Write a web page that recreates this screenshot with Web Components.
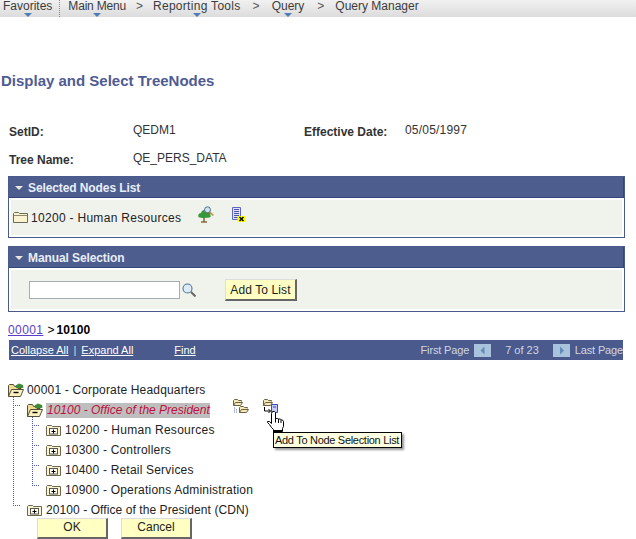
<!DOCTYPE html>
<html><head><meta charset="utf-8"><style>
html,body{margin:0;padding:0;background:#fff;overflow:hidden}
body{width:636px;height:539px;font:12px "Liberation Sans",Arial,sans-serif;color:#000}
</style></head><body>
<top-nav></top-nav>
<page-title>Display and Select TreeNodes</page-title>
<info-grid></info-grid>
<group-box title="Selected Nodes List" style="margin-top:8px"><selected-row></selected-row></group-box>
<group-box title="Manual Selection" tall style="margin-top:8px"><manual-row></manual-row></group-box>
<tree-crumb></tree-crumb>
<tree-toolbar></tree-toolbar>
<node-tree></node-tree>
<button-row></button-row>
<script>
const ICON={
 folder:`<svg width="15" height="11" viewBox="0 0 15 11"><path d="M.5 10.500V1.500l1-1h4l1 1h8v9z" fill="#fbf3cf" stroke="#6b6b5a"/><path d="M1 3.500h13" stroke="#8a8a70"/></svg>`,
 closed:`<svg width="16" height="11" viewBox="0 0 16 11"><path d="M.5 10.500V1.500l1-1h4l1 1h8v9z" fill="#fbf3cf" stroke="#6b6650"/><rect x="3.500" y="3.500" width="8" height="5.500" fill="#fffdf0" stroke="#555"/><path d="M5.500 6.500h4" stroke="#000"/><path d="M7.500 4.500v4" stroke="#000"/></svg>`,
 open:`<svg width="16" height="14" viewBox="0 0 16 14"><path d="M.5 13.500V2.500l1-1h4l1 2h4v3" fill="#f1dc96" stroke="#55503c"/><path d="M.5 13.500l3-7h12l-3 7z" fill="#fbf0c0" stroke="#55503c"/><path d="M7.500 2.500L11 .5l4 1.500.5 2.500-3.500 1.500-4-1z" fill="#3d8a3a"/><path d="M10 5.500h3" stroke="#6b4a20"/><path d="M5.500 9.500h5" stroke="#000" stroke-width="1.400"/></svg>`,
 tree:`<svg width="16" height="17" viewBox="0 0 16 17"><path d="M6 10.500v5M3 16h6" stroke="#8a6a40" stroke-width="1.600"/><path d="M.5 11c-1-2.500 1-4 2.500-4 .5-2.500 3-3.500 5-2.500 2.500 0 5 2 4.500 6.500-2 1-9 1.500-12 0z" fill="#37983a"/><circle cx="9.500" cy="3.800" r="3" fill="#cfe3f3" stroke="#5a6f7f"/><path d="M11.800 6.200l3.500 3.300" stroke="#b9913c" stroke-width="1.600"/></svg>`,
 del:`<svg width="14" height="15" viewBox="0 0 14 15"><path d="M.5.500h8v12h-8z" fill="#dfe2fa" stroke="#6068c0"/><path d="M2 2.500h5M2 4.500h5M2 6.500h5M2 8.500h5M2 10.500h4" stroke="#4a54a8"/><path d="M5.500 9h8.500v6H5.500z" fill="#ff0"/><path d="M7.500 10l4 4M11.500 10l-4 4" stroke="#000" stroke-width="1.500"/></svg>`,
 mag:`<svg width="14" height="14" viewBox="0 0 14 14"><circle cx="5.500" cy="5.500" r="4.500" fill="#dcebf7" stroke="#51758f" stroke-width="1.100"/><path d="M9 9l4.500 4.500" stroke="#666" stroke-width="2"/></svg>`,
 two:`<svg width="16" height="15" viewBox="0 0 16 15"><path d="M.5 6.500v-5l1-1h3l1 1h3v1M.5 6.500l2-3h7l-2 3z" fill="#f7e7b5" stroke="#6b6348"/><path d="M6.500 13.500v-5l1-1h3l1 1h3v1M6.500 13.500l2-3h7l-2 3z" fill="#f7e7b5" stroke="#6b6348"/><path d="M1 9h.9M1 11h.9M1 13h.9M3 11h.9M3 13h.9" stroke="#5a6fb0"/></svg>`,
 add:`<svg width="15" height="15" viewBox="0 0 15 15"><path d="M.5 6.500v-5l1-1h3l1 1h3v1M.5 6.500l2-3h7l-2 3z" fill="#f7e7b5" stroke="#6b6348"/><path d="M1.500 8v4h6M5.500 10l2 2-2 2" fill="none" stroke="#000"/><path d="M8.500 5.500h6v8h-6z" fill="#c5cdf5" stroke="#3a48c0"/><path d="M10 8h3" stroke="#3a48c0"/></svg>`,
 hand:`<svg width="18" height="21" viewBox="0 0 18 21"><path d="M6.500.5h2l1 1v6h2l1 .5h2l1 1h1l1 1.500v5l-1 2v3h-9v-2l-2-2-2-3-2-2v-1h2l2 2v-10z" fill="#fff" stroke="#000"/><path d="M9.500 7.500v4M12.500 8v4M15 9v3" stroke="#000" fill="none"/><path d="M7 20h9" stroke="#000" stroke-width="2"/></svg>`,
 left:`<svg width="17" height="13" viewBox="0 0 17 13"><rect width="17" height="13" fill="#a9c3dc"/><path d="M10.500 2.500v8l-4-4z" fill="#5f8db8"/></svg>`,
 right:`<svg width="17" height="13" viewBox="0 0 17 13"><rect width="17" height="13" fill="#a9c3dc"/><path d="M7 2.500v8l4-4z" fill="#5f8db8"/></svg>`
};
const def=(n,css,html)=>customElements.define(n,class extends HTMLElement{constructor(){super();this.attachShadow({mode:'open'})}connectedCallback(){this.shadowRoot.innerHTML=`<style>${css}</style>${typeof html==='function'?html(this):html}`}});

def('top-nav',`:host{display:flex;height:17px;background:linear-gradient(#f1f1f1,#dcdcdc);font-size:12px;color:#3c3c3c;line-height:12px}
.i{position:relative;white-space:nowrap;display:block}.i.d::after{content:"";position:absolute;left:50%;margin-left:-4px;top:13px;border:4px solid transparent;border-top:4px solid #4f7cb4;border-bottom:0}
.s{width:0;border-left:1px dotted #888;margin:0 8px 0 7px}.g{display:block;color:#555}`,
`<span class="i d" style="margin-left:3px">Favorites</span><span class="s"></span>
<span class="i d" style="letter-spacing:-.2px">Main Menu</span><span class="g" style="margin:0 10px 0 10px">&gt;</span><span class="i d" style="letter-spacing:.3px">Reporting Tools</span><span class="g" style="margin:0 12px">&gt;</span><span class="i d">Query</span><span class="g" style="margin:0 11px 0 13px">&gt;</span><span class="i">Query Manager</span>`);

def('page-title',`:host{display:block;margin:56px 0 0 1px;font:bold 15px/16px "Liberation Sans",Arial,sans-serif;color:#4f5b93}`,`<slot></slot>`);

def('info-grid',`:host{display:grid;grid-template-columns:124px 171px 101px auto;grid-template-rows:28px 17px;margin:34px 0 0 9px;font-size:12px;line-height:14px}
b{font-weight:bold;color:#333;padding-top:2px}span{color:#333}`,
`<b>SetID:</b><span>QEDM1</span><b>Effective Date:</b><span style="letter-spacing:.2px">05/05/1997</span><b>Tree Name:</b><span>QE_PERS_DATA</span>`);

def('group-box',`:host{display:block;margin-left:8px;width:617px;box-sizing:border-box;border:1px solid #4a5a8c}
.h{height:21px;box-sizing:border-box;background:#4d5d8e;border-right:1px solid #33457a;border-bottom:1px solid #33457a;font:bold 12px/20px "Liberation Sans",Arial,sans-serif;display:flex;align-items:center;gap:5px;padding:1px 0 0 6px;color:#e8eef8;letter-spacing:-.1px}
.t{width:0;height:0;border:4px solid transparent;border-top:4px solid #e8e8e0;border-bottom:0}
.b{margin:2px;background:#f0f2ec}`,
h=>`<div class="h"><span class="t"></span>${h.getAttribute('title')}</div><div class="b"><slot></slot></div>`);

def('selected-row',`:host{display:flex;align-items:center;height:35px;padding-left:2px;font-size:12px;color:#222}
svg{display:block}.a{margin:0 0 7px 17px}.c{margin:0 0 6px 18px}.n{margin-left:3px;letter-spacing:.3px}`,
`${ICON.folder}<span class="n">10200 - Human Resources</span><span class="a">${ICON.tree}</span><span class="c">${ICON.del}</span>`);

def('manual-row',`:host{display:flex;align-items:center;height:39px;padding-left:18px}
.in{width:151px;height:18px;box-sizing:border-box;background:#fff;border:1px solid #a5acb2}
svg{display:block}.m{margin-left:2px}
.btn{margin-left:29px;width:72px;height:22px;box-sizing:border-box;background:#ffffc4;border:solid;border-width:1px 2px 2px 1px;border-color:#ddd #666 #666 #ddd;font-size:12px;line-height:20px;text-align:center;color:#222;letter-spacing:.1px}`,
`<span class="in"></span><span class="m">${ICON.mag}</span><span class="btn">Add To List</span>`);

def('tree-crumb',`:host{display:block;margin:11px 0 0 8px;font-size:12px;line-height:14px}a{color:#5a3ec8;text-decoration:underline;letter-spacing:.4px}b{color:#000;margin-left:2px;letter-spacing:.1px}`,`<a>00001</a><span style="margin-left:4px">&gt;</span><b>10100</b>`);

def('tree-toolbar',`:host{display:flex;align-items:center;margin:3px 13px 0 9px;height:20px;background:#4a5a8c;font-size:11px;color:#d5dce8;white-space:nowrap}
a{color:#fff;text-decoration:underline}.r{margin-left:auto;display:flex;align-items:center;color:#cfd6e4}svg{display:block}.p{letter-spacing:-.15px}`,
`<a style="margin-left:2px">Collapse All</a><span style="margin:0 5px">|</span><a>Expand All</a><a style="margin-left:41px">Find</a>
<span class="r"><span class="p">First Page</span><span style="margin:0 14px 0 5px">${ICON.left}</span><span>7 of 23</span><span style="margin:0 5px 0 14px">${ICON.right}</span><span class="p">Last Page</span></span>`);

def('tree-row',`:host{display:flex;align-items:center;height:20px;white-space:nowrap;color:#222;font-size:12px;position:relative}
svg{display:block}.t{margin-left:3px}
.sel{margin-left:3px;background:#bebebe;color:#c01040;font-style:italic;padding-left:1px;line-height:15px}
.h{position:absolute;top:5px;height:1px;width:8px;background:repeating-linear-gradient(90deg,#4a55b5 0 1px,transparent 1px 2px)}
.v{position:absolute;width:1px;background:repeating-linear-gradient(180deg,#4a55b5 0 1px,transparent 1px 2px)}
.ic{width:16px}`,
h=>{const k=h.getAttribute('kind'),up=+h.getAttribute('up'),x=+h.getAttribute('x');
 return `${up?`<span class="v" style="left:${x-14}px;top:${5-up}px;height:${up}px"></span><span class="h" style="left:${x-14}px"></span>`:''}<span class="ic" style="margin-left:${x}px">${ICON[k]}</span><span class="${h.hasAttribute('sel')?'sel':'t'}" style="letter-spacing:${h.getAttribute('ls')||0}px"><slot></slot></span>`});

def('node-tree',`:host{display:block;margin-top:20px;position:relative}
.acts{position:absolute;left:233px;top:19px;display:flex;gap:14px}
svg{display:block}
.hand{position:absolute;left:266px;top:31px}
.tip{position:absolute;left:273px;top:52px;height:16px;box-sizing:border-box;padding:0 2px 0 1px;border:1px solid #000;background:#ffffe1;font-size:11px;line-height:14px;letter-spacing:-.3px;color:#111;box-shadow:2px 2px 2px #999;white-space:nowrap}`,
`<slot></slot><span class="acts"><span>${ICON.two}</span><span>${ICON.add}</span></span><span class="hand">${ICON.hand}</span><span class="tip">Add To Node Selection List</span>`);

def('button-row',`:host{display:flex;gap:13px;margin:-2px 0 0 37px}
span{width:71px;height:21px;box-sizing:border-box;background:#ffffc4;border:solid;border-width:1px 2px 2px 1px;border-color:#ddd #666 #666 #ddd;font-size:12px;line-height:16px;text-align:center;color:#222}`,`<span>OK</span><span>Cancel</span>`);

const t=document.querySelector('node-tree');
t.innerHTML=[[8,'open','00001 - Corporate Headquarters',0,0,.17],[27,'open','10100 - Office of the President',8,1,0],[46,'closed','10200 - Human Resources',8,0,.28],[46,'closed','10300 - Controllers',28,0,.2],[46,'closed','10400 - Retail Services',48,0,.2],[46,'closed','10900 - Operations Administration',68,0,.2],[27,'closed','20100 - Office of the President (CDN)',108,0,.08]]
.map(([x,k,s,u,sel,ls])=>`<tree-row x="${x}" kind="${k}" ls="${ls}" ${u?`up="${u}"`:''} ${sel?'sel':''}>${s}</tree-row>`).join('');
</script>
</body></html>
